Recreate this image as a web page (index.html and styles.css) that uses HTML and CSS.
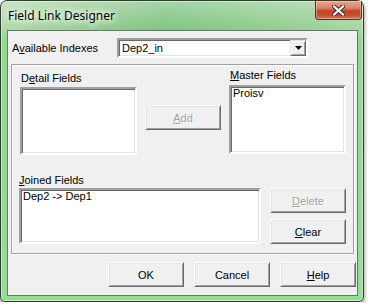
FILE: index.html
```
<!DOCTYPE html>
<html lang="en">
<head>
    <meta charset="UTF-8">
    <title>Field Link Designer</title>
    <link rel="stylesheet" href="styles.css">
</head>
<body>
    <div class="window">
        <div class="titlebar">
            <span class="title">Field Link Designer</span>
            <span class="close-btn">
                <svg width="13" height="11" viewBox="0 0 13 11">
                    <path d="M2 1.5 L11 9.5 M11 1.5 L2 9.5" stroke="#3b2a26" stroke-width="4.2" stroke-linecap="square" fill="none"/>
                    <path d="M2 1.5 L11 9.5 M11 1.5 L2 9.5" stroke="#fff" stroke-width="2.2" stroke-linecap="square" fill="none"/>
                </svg>
            </span>
        </div>
        <div class="client">
            <div class="index-row">
                <label class="index-label">A<u>v</u>ailable Indexes</label>
                <div class="combo">
                    <span class="combo-text">Dep2_in</span>
                    <span class="combo-btn">
                        <svg width="7" height="4" viewBox="0 0 7 4"><path d="M0 0 H7 L3.5 4 Z" fill="#000"/></svg>
                    </span>
                </div>
            </div>
            <div class="group">
                <div class="fields-row">
                    <div class="field-col detail">
                        <div class="field-label">D<u>e</u>tail Fields</div>
                        <div class="listbox detail-list"></div>
                    </div>
                    <button class="btn add-btn" disabled><u>A</u>dd</button>
                    <div class="field-col master">
                        <div class="field-label"><u>M</u>aster Fields</div>
                        <div class="listbox master-list">
                            <div class="list-item">Proisv</div>
                        </div>
                    </div>
                </div>
                <div class="joined-row">
                    <div class="field-col joined">
                        <div class="field-label"><u>J</u>oined Fields</div>
                        <div class="listbox joined-list">
                            <div class="list-item">Dep2 -&gt; Dep1</div>
                        </div>
                    </div>
                    <div class="side-btns">
                        <button class="btn" disabled><u>D</u>elete</button>
                        <button class="btn"><u>C</u>lear</button>
                    </div>
                </div>
            </div>
            <div class="dialog-btns">
                <button class="btn">OK</button>
                <button class="btn">Cancel</button>
                <button class="btn"><u>H</u>elp</button>
            </div>
        </div>
    </div>
</body>
</html>
```

FILE: styles.css
```
* {
    margin: 0;
    padding: 0;
    box-sizing: border-box;
}
body {
    background: #fff;
    font-family: 'Liberation Sans', Arial, sans-serif;
    font-size: 11px;
    color: #000;
}
.window {
    width: 364px;
    height: 302px;
    padding: 0 5px 5px 6px;
    border: 1px solid #2f3f2f;
    border-radius: 7px 7px 5px 5px;
    background:
        linear-gradient(180deg, rgba(255, 255, 255, 0.3), rgba(255, 255, 255, 0) 30px),
        linear-gradient(180deg, rgba(140, 215, 135, 0) 0, rgba(140, 215, 135, 0) 28px, #92d88e 40px, #96dc92 100%),
        linear-gradient(90deg, #b2d8ac 0%, #98cd93 22%, #80c283 45%, #8ac98a 65%, #99ce96 85%, #a8d6a3 100%);
    box-shadow: inset 0 0 0 1px rgba(255, 255, 255, 0.45), 0 2px 4px rgba(0, 0, 0, 0.55);
    display: flex;
    flex-direction: column;
}
.titlebar {
    height: 29px;
    display: flex;
    align-items: flex-start;
}
.title {
    font-family: 'Noto Sans', 'Open Sans', sans-serif;
    font-size: 12px;
    line-height: 16px;
    margin: 7px 0 0 1px;
    color: #000;
    text-shadow: 0 0 6px #fff, 0 0 8px #fff, 0 0 10px rgba(255, 255, 255, 0.8);
}
.close-btn {
    margin-left: auto;
    margin-right: -4px;
    width: 47px;
    height: 19px;
    display: flex;
    align-items: center;
    justify-content: center;
    border: 1px solid #5b2d24;
    border-top: none;
    border-radius: 0 0 4px 4px;
    background: linear-gradient(180deg, #e9a691 0%, #d9826a 40%, #c2452b 55%, #c54f33 80%, #d9785a 100%);
    box-shadow: inset 0 0 0 1px rgba(255, 220, 210, 0.45);
}
.client {
    flex: 1;
    background: #f0f0f0;
    border: 1px solid #5f7d5f;
    display: flex;
    flex-direction: column;
}
.index-row {
    display: flex;
    align-items: center;
    padding: 7px 0 0 4px;
}
.index-label {
    width: 105px;
}
.combo {
    width: 191px;
    height: 20px;
    display: flex;
    align-items: center;
    background: #fff;
    border: 2px solid;
    border-color: #a0a0a0 #fff #fff #a0a0a0;
    box-shadow: inset 1px 1px 0 #696969, inset -1px -1px 0 #e3e3e3;
}
.combo-text {
    flex: 1;
    padding-left: 3px;
}
.combo-btn {
    width: 16px;
    height: 16px;
    display: flex;
    align-items: center;
    justify-content: center;
    background: #f0f0f0;
    border: 1px solid;
    border-color: #e3e3e3 #696969 #696969 #e3e3e3;
    box-shadow: inset 1px 1px 0 #fff, inset -1px -1px 0 #a0a0a0;
}
.group {
    margin: 6px 0 0 3px;
    width: 343px;
    height: 190px;
    border: 1px solid #a0a0a0;
    box-shadow: inset 1px 1px 0 #fff, 1px 1px 0 #fff;
}
.fields-row {
    display: flex;
    align-items: flex-start;
}
.field-col.detail {
    margin: 7px 0 0 8px;
}
.field-col.master {
    margin: 4px 0 0 8px;
}
.field-label {
    height: 13px;
    line-height: 13px;
    padding-left: 1px;
}
.detail .field-label {
    margin-bottom: 2px;
}
.master .field-label {
    margin-bottom: 3px;
}
.joined .field-label {
    margin-bottom: 1px;
    padding-left: 0;
}
.listbox {
    background: #fff;
    border: 2px solid;
    border-color: #a0a0a0 #fff #fff #a0a0a0;
    box-shadow: inset 1px 1px 0 #696969, inset -1px -1px 0 #e3e3e3;
    padding: 0 2px;
}
.list-item {
    line-height: 13px;
}
.detail-list {
    width: 117px;
    height: 68px;
}
.master-list {
    width: 117px;
    height: 69px;
}
.joined-list {
    width: 242px;
    height: 56px;
}
.btn {
    width: 76px;
    height: 25px;
    font-family: 'Liberation Sans', Arial, sans-serif;
    font-size: 11px;
    color: #000;
    background: #f0f0f0;
    border: 1px solid;
    border-color: #fff #696969 #696969 #fff;
    box-shadow: inset 1px 1px 0 #e3e3e3, inset -1px -1px 0 #a0a0a0;
}
.btn:disabled {
    color: #a0a0a0;
    text-shadow: 1px 1px 0 #fff;
}
.add-btn {
    margin: 40px 0 0 8px;
}
.joined-row {
    display: flex;
    align-items: flex-start;
    margin-top: 19px;
}
.field-col.joined {
    margin-left: 7px;
}
.side-btns {
    display: flex;
    flex-direction: column;
    gap: 6px;
    margin: 14px 0 0 9px;
}
.dialog-btns {
    display: flex;
    justify-content: flex-end;
    gap: 10px;
    margin-top: 8px;
    padding-right: 1px;
}
```
